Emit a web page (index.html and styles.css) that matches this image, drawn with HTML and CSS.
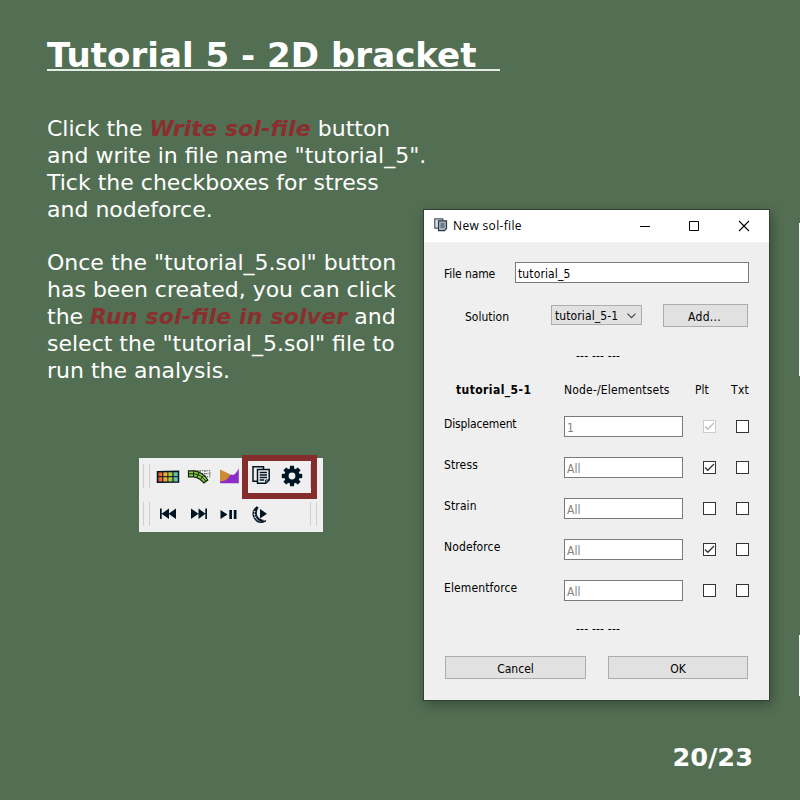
FILE: index.html
```html
<!DOCTYPE html>
<html lang="en">
<head>
<meta charset="utf-8">
<title>Tutorial 5 - 2D bracket</title>
<link rel="stylesheet" href="styles.css">
</head>
<body>
<main class="slide">
  <h1 class="title">Tutorial 5 - 2D bracket</h1>
  <div class="content">
    <section class="left">
      <div class="copy">
        <p>Click the <em>Write sol-file</em> button<br>and write in file name "tutorial_5".<br>Tick the checkboxes for stress<br>and nodeforce.</p>
        <p>Once the "tutorial_5.sol" button<br>has been created, you can click<br>the <em>Run sol-file in solver</em> and<br>select the "tutorial_5.sol" file to<br>run the analysis.</p>
      </div>
      <div class="toolbar">
        <div class="tools">
          <i class="grip"></i>
          <svg class="tool mesh" width="24" height="24" viewBox="0 0 24 24">
            <defs><linearGradient id="heat"><stop offset="0" stop-color="#d8402c"/><stop offset=".25" stop-color="#f08a2c"/><stop offset=".5" stop-color="#e8cc38"/><stop offset=".72" stop-color="#74c058"/><stop offset="1" stop-color="#5cc0e8"/></linearGradient></defs>
            <path d="M1.500 7.800 22.500 7.200v10.800L1.500 18.200z" fill="url(#heat)" stroke="#001523" stroke-width="1.500"/>
            <path d="M1.500 12.700h21M6.700 7.500v10.500M11.900 7.500v10.500M17 7.500v10.500" stroke="#001523" stroke-width="1"/>
          </svg>
          <svg class="tool" width="24" height="24" viewBox="0 0 24 24">
            <path d="M8 6.700h15v6H15M13 6.700v5M18 6.700v6M10 9.700h13" fill="none" stroke="#555" stroke-width="1" stroke-dasharray="1.3 1"/>
            <path d="M1.500 6.800 7 6.800Q16 8 20.800 16L16.800 19Q13 14 7 12.800L1.500 12.800z" fill="#86ce45" stroke="#14240b" stroke-width="1.200"/>
            <path d="M1.500 9.800H7Q14.500 10.500 18.800 17.500M6.500 6.800v6M12 8.300 10 13.500M16.700 11.200 13.400 15.600" fill="none" stroke="#14240b"/>
          </svg>
          <svg class="tool" width="24" height="24" viewBox="0 0 24 24">
            <path d="M2 5.500 10.500 9.500 14.500 12 16.500 10v8H2z" fill="#c98c30"/>
            <path d="M2 19.300V17.500Q8.500 17 11 13Q12.500 9.500 15 11Q17.500 10.500 20.800 4.500V19.300z" fill="#8b2cc8"/>
          </svg>
          <svg class="tool" width="24" height="24" viewBox="0 0 24 24" fill="none" stroke="#001523">
            <path d="M8.500 17.300H4V2.700H14.500v2.500" stroke-width="1.500"/>
            <path d="M8.500 5.500h11.700v10.500L16.700 19.200H8.500z" stroke-width="1.500" fill="#efefef"/>
            <path d="M10.700 8.500h7.300M10.700 11h7.300M10.700 13.500h7.300M10.700 16h4.500" stroke-width="1.300"/>
            <path d="M16.700 19.200v-3.200h3.500" stroke-width="1"/>
          </svg>
          <svg class="tool gear" width="24" height="24" viewBox="-12 -12 24 24">
            <g fill="#001523"><path id="tooth" d="M-2.500-6 -1.900-10.200H1.900L2.500-6z"/><use href="#tooth" transform="rotate(45)"/><use href="#tooth" transform="rotate(90)"/><use href="#tooth" transform="rotate(135)"/><use href="#tooth" transform="rotate(180)"/><use href="#tooth" transform="rotate(225)"/><use href="#tooth" transform="rotate(270)"/><use href="#tooth" transform="rotate(315)"/></g>
            <circle r="5.500" fill="none" stroke="#001523" stroke-width="4.200"/>
          </svg>
          <i class="grip single"></i>
        </div>
        <div class="tools second">
          <i class="grip"></i>
          <svg class="tool" width="24" height="24" viewBox="0 0 24 24" fill="#001523"><path d="M4 6.500h1.700v10.500H4zM5.500 11.800 13 6.500v10.500zM12.500 11.800 20 6.500v10.500z"/></svg>
          <svg class="tool" width="24" height="24" viewBox="0 0 24 24" fill="#001523"><path d="M4 6.500 11.500 11.800 4 17zM11.500 6.500 18.500 11.800 11.500 17zM18.300 6.500h1.700v10.500H18.300z"/></svg>
          <svg class="tool" width="24" height="24" viewBox="0 0 24 24" fill="#001523"><path d="M2.500 8 9.500 12.500 2.500 17zM11.300 8h2.700v9h-2.700zM15.800 8h2.700v9h-2.700z"/></svg>
          <svg class="tool" width="24" height="24" viewBox="0 0 24 24" fill="none"><path d="M8 5.200Q2.500 9 5 15Q7.500 21 14 20Q15.500 19.500 17 18.600" stroke="#001523" stroke-width="1.500"/><path d="M8.700 4.800Q6 9 7 13.500Q9 18.500 14.500 19" stroke="#001523" stroke-width="2.200"/><path d="M4.500 9.500h2M4.500 12.500h2M5.500 15.500 7.500 14.800" stroke="#efefef" stroke-width=".8"/><path d="M11 7 18 11.800 11 16.500z" fill="#001523"/></svg>
          <i class="grip end"></i>
        </div>
        <div class="highlight"></div>
      </div>
    </section>

    <section class="dialog">
      <header class="titlebar">
        <svg class="app-icon" width="14" height="14" viewBox="0 0 14 14"><path d="M4 10.200H.8V.8h8v2" fill="#dce3e8" stroke="#46545f" stroke-width="1.200"/><path d="M4.500 2.800h8v7.700L10.500 12.600h-6z" fill="#a9b4bc" stroke="#2d3943" stroke-width="1.200"/><path d="M6.500 5h4v5h-4z" fill="#6d7b85"/></svg>
        <span class="caption">New sol-file</span>
        <svg class="controls" width="112" height="14" viewBox="0 0 112 14" fill="none" stroke="#000"><path d="M1 7.500h10M50.500 2.500h9v9h-9z"/><path d="M100 2l10 10M110 2l-10 10" stroke-width="1.100"/></svg>
      </header>
      <div class="form">
        <div class="file-row"><label>File name</label><div class="input">tutorial_5</div></div>
        <div class="solution-row"><label>Solution</label><div class="select"><span>tutorial_5-1</span><svg width="9" height="6" viewBox="0 0 9 6"><path d="M.5.700 4.500 4.700 8.500.700" fill="none" stroke="#444" stroke-width="1.100"/></svg></div><div class="button add">Add...</div></div>
        <div class="dashes">--- --- ---</div>
        <div class="row head"><b>tutorial_5-1</b><span class="sets">Node-/Elementsets</span><span class="plt">Plt</span><span class="txt">Txt</span></div>
        <div class="row"><label class="tight">Displacement</label><div class="input muted">1</div><i class="check disabled"><svg viewBox="0 0 11 11"><path d="M1 5.500 3.800 8.300 10 2"/></svg></i><i class="check"></i></div>
        <div class="row"><label>Stress</label><div class="input muted">All</div><i class="check"><svg viewBox="0 0 11 11"><path d="M1 5.500 3.800 8.300 10 2"/></svg></i><i class="check"></i></div>
        <div class="row"><label>Strain</label><div class="input muted">All</div><i class="check"></i><i class="check"></i></div>
        <div class="row"><label>Nodeforce</label><div class="input muted">All</div><i class="check"><svg viewBox="0 0 11 11"><path d="M1 5.500 3.800 8.300 10 2"/></svg></i><i class="check"></i></div>
        <div class="row"><label>Elementforce</label><div class="input muted">All</div><i class="check"></i><i class="check"></i></div>
        <div class="dashes lower">--- --- ---</div>
        <div class="actions"><div class="button">Cancel</div><div class="button">OK</div></div>
      </div>
    </section>
  </div>
  <footer class="page">20/23</footer>
</main>
</body>
</html>
```
FILE: styles.css
```css
* { box-sizing: border-box; }
body { margin: 0; }

.slide {
  width: 800px;
  height: 800px;
  overflow: hidden;
  display: flex;
  flex-direction: column;
  color: #fff;
  font-family: "DejaVu Sans", sans-serif;
  background:
    linear-gradient(#fff, #fff) 799px 223px / 1px 153px no-repeat,
    linear-gradient(#fff, #fff) 799px 635px / 1px 61px no-repeat,
    #536f53;
}

.title {
  width: 453px;
  height: 35px;
  margin: 36px 0 0 47px;
  border-bottom: 2px solid #e6ebe6;
  font-size: 34.1px;
  line-height: 39px;
  white-space: nowrap;
}

.content {
  display: flex;
  height: 630px;
}

.left { width: 423px; padding: 45px 0 0 47px; }
.copy {
  height: 342px;
  padding-top: .3px;
  font-size: 22px;
  line-height: 26.83px;
  white-space: nowrap;
}
.copy p { margin: 0 0 26.83px; }
.copy em { font-weight: bold; letter-spacing: .16px; font-feature-settings: "liga" 1; color: #8a2e2e; }

.toolbar {
  position: relative;
  width: 184px;
  height: 74px;
  margin-left: 92px;
  padding: 6px 0 0 4px;
  background: #efefef;
}
.tools { display: flex; align-items: center; height: 24px; }
.second { margin-top: 14px; }
.tool { flex: none; margin-right: 7px; }
.grip {
  flex: none;
  width: 7px;
  height: 24px;
  margin-right: 6px;
  border: solid #d0d0d0;
  border-width: 0 1px;
}
.grip.single { width: 1px; margin: 0 0 0 -1px; border-right: 0; }
.grip.end { margin: 0 0 0 30px; }
.highlight {
  position: absolute;
  left: 103px;
  top: -3px;
  width: 75px;
  height: 44px;
  border: 6px solid #852d2d;
}

.dialog {
  flex: none;
  width: 347px;
  height: 492px;
  margin-top: 138px;
  border: 1px solid #344034;
  background: #efefef;
  box-shadow: 2px 4px 12px rgba(0, 0, 0, .32);
  color: #000;
  font: 12px/15px "DejaVu Sans Condensed", "DejaVu Sans", sans-serif;
  font-stretch: condensed;
}
.titlebar {
  display: flex;
  align-items: center;
  height: 32px;
  padding: 0 18px 0 10px;
  background: #fff;
}
.app-icon { margin: -2px 5px 0 0; }
.caption { font: 12px/16px "Open Sans", sans-serif; letter-spacing: .34px; }
.controls { margin-left: auto; margin-top: -1px; }

.form { padding: 20px 20px 0; }
.file-row { display: grid; grid-template-columns: 71px 234px; align-items: center; }
.file-row label { padding-top: 3px; letter-spacing: -.1px; }
.input {
  height: 21px;
  padding: 3px 2px 0;
  border: 1px solid #7a7a7a;
  background: #fff;
  line-height: 16px;
}
.file-row .input { letter-spacing: .12px; }
.muted { color: #838383; }
.solution-row {
  display: grid;
  grid-template-columns: 86px 91px 85px;
  column-gap: 21px;
  align-items: center;
  height: 23px;
  margin-top: 21px;
}
.solution-row label { padding: 3px 0 0 21px; }
.select {
  display: flex;
  align-items: center;
  justify-content: space-between;
  height: 20px;
  margin-top: -1px;
  padding: 2px 5px 0 3px;
  border: 1px solid #adadad;
  background: #e1e1e1;
}
.select span { letter-spacing: .1px; }
.select svg { margin-top: -1px; }
.button {
  height: 23px;
  padding-top: 5px;
  border: 1px solid #adadad;
  background: #e1e1e1;
  text-align: center;
}
.add { letter-spacing: .3px; padding-right: 2px; }
.dashes { height: 15px; margin-top: 22px; padding-left: 132px; letter-spacing: .2px; }
.row {
  display: grid;
  grid-template-columns: 100px 119px 13px 13px;
  column-gap: 20px;
  align-items: center;
  height: 21px;
  margin-bottom: 20px;
}
.row label { margin-top: -5px; letter-spacing: .12px; }
.row .tight { letter-spacing: -.15px; }
.head { height: 15px; margin: 19px 0 18px; white-space: nowrap; }
.head b { padding-left: 12px; letter-spacing: .42px; }
.head .sets { letter-spacing: .18px; }
.head .plt { margin-left: -8px; }
.head .txt { margin-left: -5px; letter-spacing: .3px; }
.check {
  width: 13px;
  height: 13px;
  border: 1px solid #333;
  background: #fff;
}
.check svg { display: block; width: 11px; height: 11px; }
.check path { fill: none; stroke: #333; stroke-width: 1.3; }
.disabled { border-color: #ccc; }
.disabled path { stroke: #bbb; }
.lower { margin-top: 21px; }
.actions {
  display: grid;
  grid-template-columns: 141px 140px;
  column-gap: 22px;
  margin: 19px 0 0 1px;
}
.page {
  margin: 41px 47px 0 0;
  text-align: right;
  font-weight: bold;
  font-size: 25.6px;
  line-height: 30px;
}
```
